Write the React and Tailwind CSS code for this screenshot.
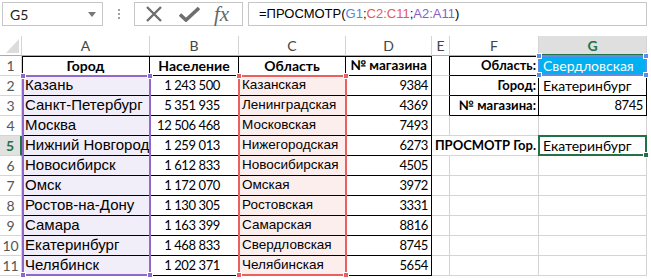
import React from 'react';

const rows = [
  ['Казань', '1 243 500', 'Казанская', '9384'],
  ['Санкт-Петербург', '5 351 935', 'Ленинградская', '4369'],
  ['Москва', '12 506 468', 'Московская', '7493'],
  ['Нижний Новгород', '1 259 013', 'Нижегородская', '6273'],
  ['Новосибирск', '1 612 833', 'Новосибирская', '4505'],
  ['Омск', '1 172 070', 'Омская', '3972'],
  ['Ростов-на-Дону', '1 130 305', 'Ростовская', '3331'],
  ['Самара', '1 163 399', 'Самарская', '8816'],
  ['Екатеринбург', '1 468 833', 'Свердловская', '8745'],
  ['Челябинск', '1 202 371', 'Челябинская', '5654'],
];

const side = {
  1: ['Область:', 'Свердловская'],
  2: ['Город:', 'Екатеринбург'],
  3: ['№ магазина:', '8745'],
  5: ['ПРОСМОТР Гор.', 'Екатеринбург'],
};

const base = 'flex items-center whitespace-nowrap border-r border-b';
const arial = "font-['Liberation_Sans',sans-serif]";
const num = 'text-[13px] tracking-[-0.4px]';

function ColHeader({ children, active }) {
  if (active) {
    return (
      <div className="flex items-center justify-center border-r border-[#d4d4d4] border-b-2 border-b-[#217346] bg-[#dfdfdf] text-[14px] font-bold text-[#217346]">
        {children}
      </div>
    );
  }
  return (
    <div className="flex items-center justify-center border-r border-r-[#d4d4d4] border-b border-b-[#ababab] text-[14px] text-[#444]">
      {children}
    </div>
  );
}

function Row({ n }) {
  const isHead = n === 1;
  const d = isHead ? ['Город', 'Население', 'Область', '№ магазина'] : rows[n - 2];
  const s = side[n];
  const inTable = n <= 3;
  return (
    <>
      {n === 5 ? (
        <div className="flex items-center justify-center border-b border-b-[#d4d4d4] border-r-2 border-r-[#217346] bg-[#e1e1e1] text-[14px] font-bold text-[#217346]">
          {n}
        </div>
      ) : (
        <div className="flex items-center justify-center border-r border-b border-[#d4d4d4] text-[14px] text-[#555]">
          {n}
        </div>
      )}

      {isHead ? (
        <>
          <div className={`${base} justify-center border-black font-bold text-[14px] shadow-[inset_1px_1px_0_#000]`}>{d[0]}</div>
          <div className={`${base} justify-center border-black font-bold text-[14px] shadow-[inset_0_1px_0_#000]`}>{d[1]}</div>
          <div className={`${base} justify-center border-black font-bold text-[14px] shadow-[inset_0_1px_0_#000]`}>{d[2]}</div>
          <div className={`${base} justify-center border-black font-bold text-[13.5px] shadow-[inset_0_1px_0_#000]`}>{d[3]}</div>
        </>
      ) : (
        <>
          <div className={`${base} overflow-hidden border-black bg-[#f1edf9] pl-[3px] text-[15px] ${arial} shadow-[inset_1px_0_0_#000]`}>{d[0]}</div>
          <div className={`${base} justify-end border-black pr-[18px] ${num}`}>{d[1]}</div>
          <div className={`${base} overflow-hidden border-black bg-[#fdeeee] pl-[3px] text-[13.5px] ${arial}`}>{d[2]}</div>
          <div className={`${base} justify-end border-black pr-[3px] ${num}`}>{d[3]}</div>
        </>
      )}

      {inTable ? (
        <div className={`${base} border-r-black border-b-[#d4d4d4]`} />
      ) : n === 5 ? (
        <div className={`${base} border-r-white border-b-[#d4d4d4]`} />
      ) : (
        <div className={`${base} border-[#d4d4d4]`} />
      )}

      {inTable ? (
        <div className={`${base} justify-end border-black pr-[2px] text-[13px] font-bold ${n === 1 ? 'shadow-[inset_0_1px_0_#000]' : ''}`}>
          {s[0]}
        </div>
      ) : n === 5 ? (
        <div className={`${base} justify-end border-[#d4d4d4] pr-[2px] text-[13px] font-bold`}>{s[0]}</div>
      ) : (
        <div className={`${base} border-[#d4d4d4]`} />
      )}

      {n === 1 ? (
        <div className={`${base} border-black bg-[#00b0f0] pl-[4px] text-[14px] text-white`}>{s[1]}</div>
      ) : n === 2 ? (
        <div className={`${base} border-black pl-[4px] text-[14px]`}>{s[1]}</div>
      ) : n === 3 ? (
        <div className={`${base} justify-end border-black pr-[3px] ${num}`}>{s[1]}</div>
      ) : n === 5 ? (
        <div className={`${base} border-[#d4d4d4] pl-[4px] text-[14px]`}>{s[1]}</div>
      ) : (
        <div className={`${base} border-[#d4d4d4]`} />
      )}
    </>
  );
}

export default function App() {
  return (
    <div className="relative h-[279px] w-[651px] overflow-hidden bg-white font-['Lato',sans-serif] text-black">
      {/* formula bar */}
      <div className="flex h-[36px] items-start pl-[2px] pt-[2px]">
        <div className="flex h-[24px] w-[101px] items-center justify-between border border-[#c6c6c6] pl-[7px] pr-[6px] text-[14px] text-[#222]">
          <span>G5</span>
          <svg width="8" height="5" viewBox="0 0 8 5">
            <path d="M0 0 H8 L4 5 Z" fill="#777" />
          </svg>
        </div>
        <div className="flex w-[31px] flex-col items-center gap-[2px] pt-[7px]">
          <div className="h-[2px] w-[2px] bg-[#a0a0a0]" />
          <div className="h-[2px] w-[2px] bg-[#a0a0a0]" />
          <div className="h-[2px] w-[2px] bg-[#a0a0a0]" />
        </div>
        <div className="flex h-[24px] w-[109px] items-center border border-[#c6c6c6]">
          <svg className="ml-[10px]" width="18" height="16" viewBox="0 0 18 16">
            <path d="M2 1 L16 15 M16 1 L2 15" stroke="#6e6e6e" strokeWidth="2.4" />
          </svg>
          <svg className="ml-[16px]" width="21" height="16" viewBox="0 0 21 16">
            <path d="M1 8.5 L7 14 L20 2" stroke="#6e6e6e" strokeWidth="3.6" fill="none" />
          </svg>
          <span className="ml-[14px] font-['Liberation_Serif',serif] text-[21px] italic leading-none text-[#666]">fx</span>
        </div>
        <div className="ml-[5px] mr-[4px] flex h-[24px] flex-1 items-center border border-[#c6c6c6] pl-[10px] font-['Liberation_Sans',sans-serif] text-[13px]">
          =ПРОСМОТР(<span className="text-[#4f86e0]">G1</span>;<span className="text-[#e45a5a]">C2:C11</span>;
          <span className="text-[#8b5ec6]">A2:A11</span>)
        </div>
      </div>

      {/* sheet */}
      <div className="relative">
        <div className="grid grid-cols-[22px_128px_89px_107px_86px_18px_89px_108px] grid-rows-[repeat(12,20px)]">
          <div className="flex items-end justify-end border-r border-r-[#d4d4d4] border-b border-b-[#ababab] pb-[2px] pr-[2px]">
            <svg width="13" height="14" viewBox="0 0 13 14">
              <path d="M13 0 V14 H0 Z" fill="#dcdcdc" />
            </svg>
          </div>
          <ColHeader>A</ColHeader>
          <ColHeader>B</ColHeader>
          <ColHeader>C</ColHeader>
          <ColHeader>D</ColHeader>
          <ColHeader>E</ColHeader>
          <ColHeader>F</ColHeader>
          <ColHeader active>G</ColHeader>
          {[1, 2, 3, 4, 5, 6, 7, 8, 9, 10, 11].map(n => (
            <Row key={n} n={n} />
          ))}
        </div>

        {/* range highlights */}
        <div className="absolute left-[22px] top-[39px] h-[201px] w-[129px] border-2 border-[#8f68c9]" />
        <div className="absolute left-[20px] top-[37px] h-[6px] w-[6px] border border-white bg-[#8f68c9]" />
        <div className="absolute left-[147px] top-[37px] h-[6px] w-[6px] border border-white bg-[#8f68c9]" />
        <div className="absolute left-[20px] top-[236px] h-[6px] w-[6px] border border-white bg-[#8f68c9]" />
        <div className="absolute left-[147px] top-[236px] h-[6px] w-[6px] border border-white bg-[#8f68c9]" />

        <div className="absolute left-[238px] top-[39px] h-[201px] w-[109px] border-2 border-[#e8605f]" />
        <div className="absolute left-[236px] top-[37px] h-[6px] w-[6px] border border-white bg-[#e8605f]" />
        <div className="absolute left-[343px] top-[37px] h-[6px] w-[6px] border border-white bg-[#e8605f]" />
        <div className="absolute left-[236px] top-[236px] h-[6px] w-[6px] border border-white bg-[#e8605f]" />
        <div className="absolute left-[343px] top-[236px] h-[6px] w-[6px] border border-white bg-[#e8605f]" />

        <div className="absolute left-[538px] top-[19px] h-[21px] w-[109px] border-2 border-[#5b8ee6]" />
        <div className="absolute left-[536px] top-[17px] h-[6px] w-[6px] border border-white bg-[#5b8ee6]" />
        <div className="absolute left-[643px] top-[17px] h-[6px] w-[6px] border border-white bg-[#5b8ee6]" />
        <div className="absolute left-[536px] top-[36px] h-[6px] w-[6px] border border-white bg-[#5b8ee6]" />
        <div className="absolute left-[643px] top-[36px] h-[6px] w-[6px] border border-white bg-[#5b8ee6]" />

        {/* active cell G5 */}
        <div className="absolute left-[538px] top-[99px] h-[21px] w-[109px] border-2 border-[#217346]" />
        <div className="absolute left-[643px] top-[116px] h-[6px] w-[6px] border border-white bg-[#217346]" />
      </div>
    </div>
  );
}
